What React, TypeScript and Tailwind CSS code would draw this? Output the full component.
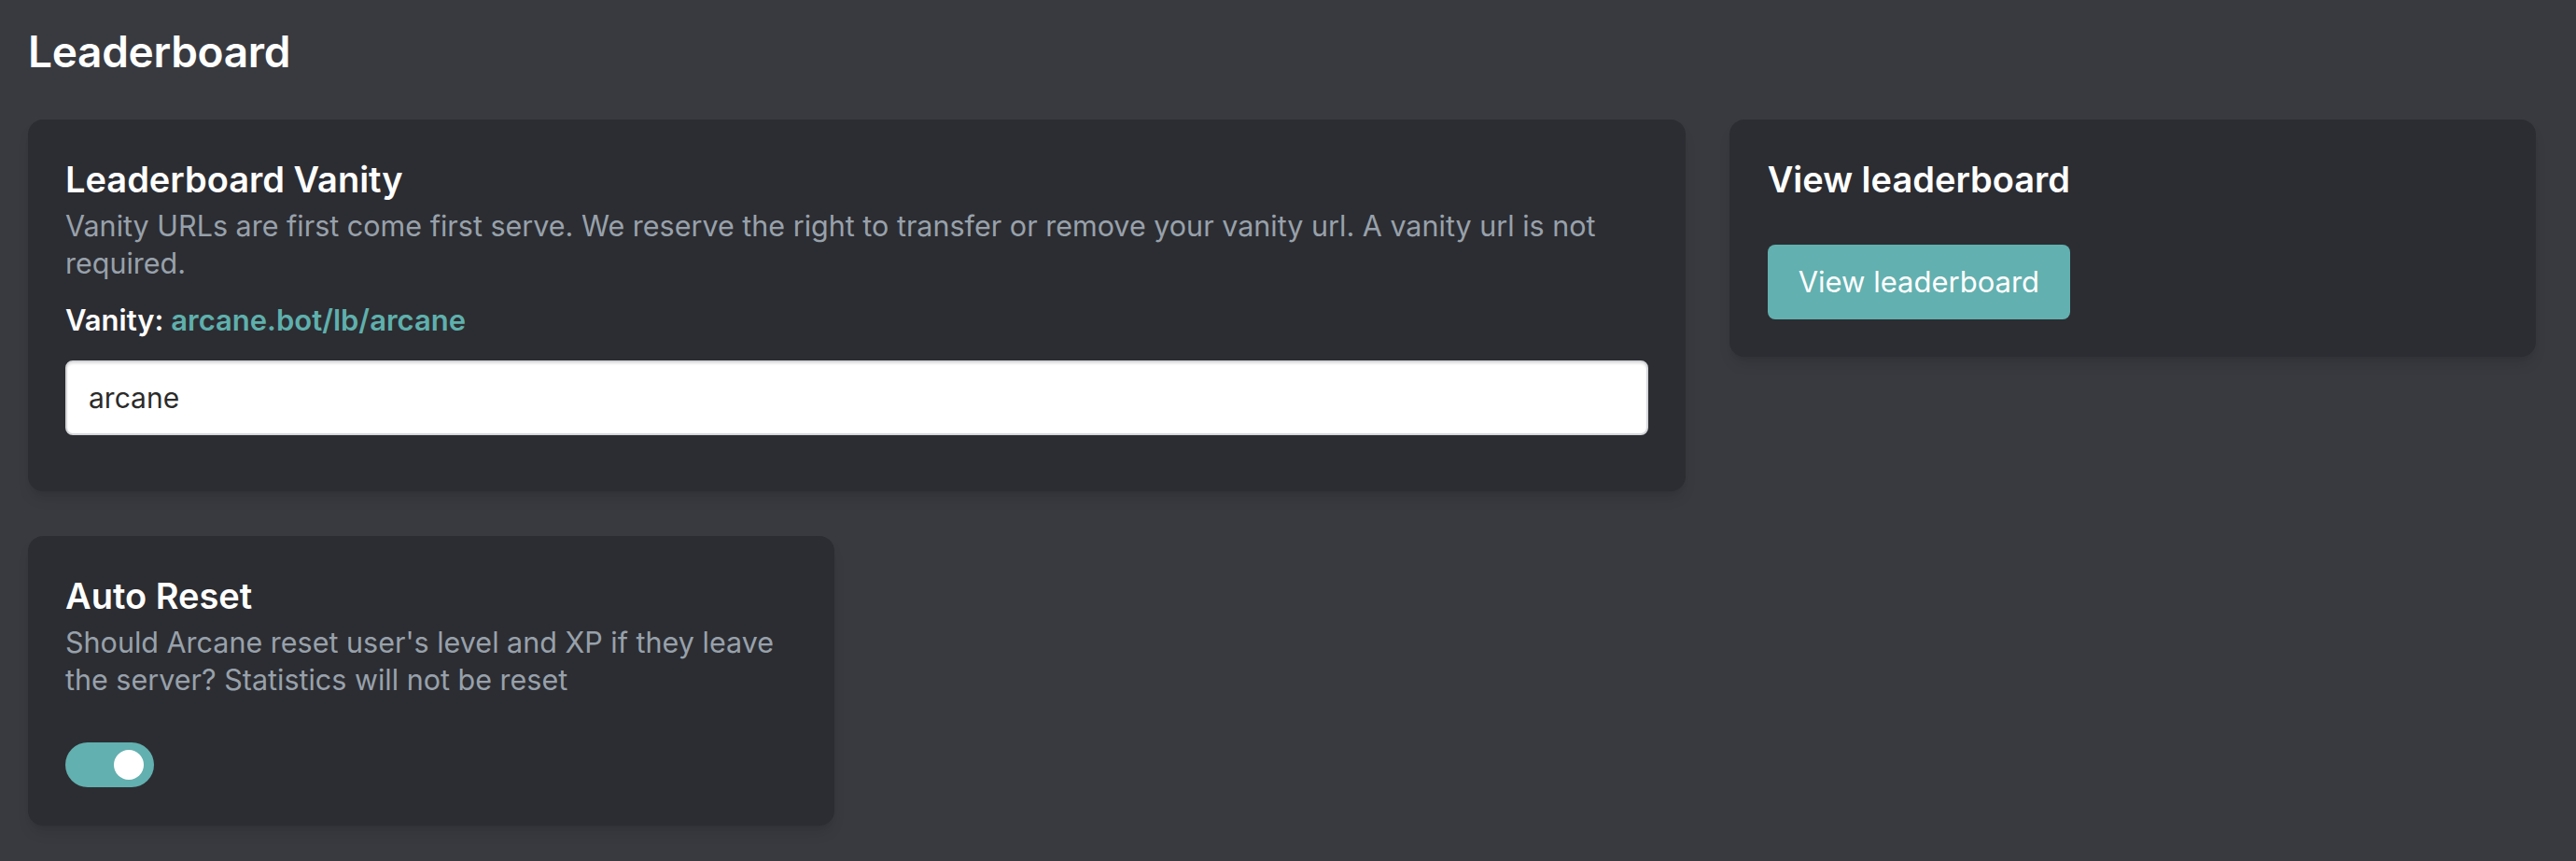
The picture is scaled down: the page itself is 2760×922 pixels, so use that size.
import React, { useState } from 'react';

const font = { fontFamily: 'Inter, "Noto Sans", sans-serif' };

const App: React.FC = () => {
  const [vanity, setVanity] = useState('arcane');
  const [autoReset, setAutoReset] = useState(true);

  return (
    <div className="min-h-screen bg-[#393a40] pt-[23px] pl-[30px] pr-[43px] pb-10" style={font}>
      <h1 className="text-[46px] leading-[64px] font-semibold tracking-[-0.3px] text-white mb-[41px]">Leaderboard</h1>

      <div className="grid grid-cols-3 gap-x-[47px] gap-y-[48px] items-start">
        {/* vanity */}
        <div className="col-span-2 bg-[#2c2d32] rounded-[16px] shadow-lg px-[40px] pt-[40px] pb-[60px]">
          <h2 className="text-[38px] leading-[48px] font-semibold text-white mb-[6px]">Leaderboard Vanity</h2>
          <p className="text-[30.5px] leading-[40px] text-[#98a1ab]">
            Vanity URLs are first come first serve. We reserve the right to transfer or remove your vanity url. A vanity
            url is not required.
          </p>
          <p className="mt-[17px] text-[31px] leading-[48px] font-semibold text-white">
            Vanity: <span className="text-[#5fb0ad]">arcane.bot/lb/{vanity}</span>
          </p>
          <input
            value={vanity}
            onChange={(e) => setVanity(e.target.value)}
            className="mt-[19px] w-full h-[80px] rounded-[8px] bg-white border-2 border-[#d6d7da] px-[23px] text-[30px] text-[#2b2b2b] outline-none shadow-[inset_0_2px_2px_rgba(0,0,0,0.08)]"
          />
        </div>

        {/* view */}
        <div className="bg-[#2c2d32] rounded-[16px] shadow-lg px-[41px] pt-[40px] pb-[40px]">
          <h2 className="text-[38px] leading-[48px] font-semibold text-white">View leaderboard</h2>
          <button className="mt-[46px] h-[80px] px-[33px] rounded-[8px] bg-[#62b0af] text-white text-[31px]">
            View leaderboard
          </button>
        </div>

        {/* auto reset */}
        <div className="bg-[#2c2d32] rounded-[16px] shadow-lg px-[40px] pt-[40px] pb-[41px]">
          <h2 className="text-[38px] leading-[48px] font-semibold text-white mb-[6px]">Auto Reset</h2>
          <p className="text-[30.5px] leading-[40px] text-[#98a1ab]">
            Should Arcane reset user's level and XP if they leave the server? Statistics will not be reset
          </p>
          <button
            onClick={() => setAutoReset(!autoReset)}
            className={
              'mt-[47px] flex items-center w-[95px] h-[48px] rounded-full ' +
              (autoReset ? 'bg-[#62b0af] justify-end pr-[11px]' : 'bg-[#4b4c52] justify-start pl-[8px]')
            }
          >
            <span className="block w-[32px] h-[32px] rounded-full bg-white" />
          </button>
        </div>
      </div>
    </div>
  );
};

export default App;
